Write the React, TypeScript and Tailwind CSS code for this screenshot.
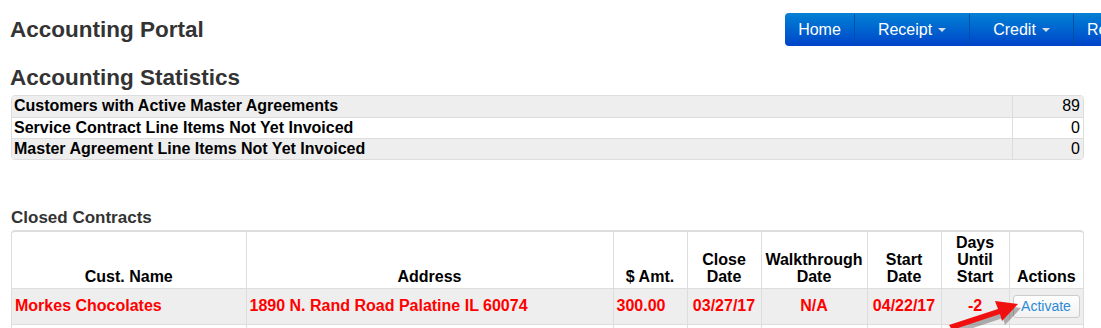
import React from "react";

const stats = [
  { label: "Customers with Active Master Agreements", value: "89", shade: true },
  { label: "Service Contract Line Items Not Yet Invoiced", value: "0", shade: false },
  { label: "Master Agreement Line Items Not Yet Invoiced", value: "0", shade: true },
];

const Caret = () => (
  <span className="ml-[6px] inline-block h-0 w-0 border-x-[4px] border-t-[4px] border-x-transparent border-t-[#d6dde8] align-middle" />
);

const App = () => {
  return (
    <div className="relative h-[328px] w-[1101px] overflow-hidden bg-white font-['Liberation_Sans',Arial,sans-serif] text-black">
      {/* top bar */}
      <div className="flex items-start pt-[13px]">
        <h1 className="mt-[4px] w-[785px] shrink-0 pl-[10px] text-[22.5px] font-bold leading-[26px] text-[#333]">
          Accounting Portal
        </h1>
        <nav className="flex h-[33px] shrink-0 rounded-l-[4px] bg-gradient-to-b from-[#0a80d4] to-[#0043c9] pt-[1px] text-[16px] text-white">
          <a className="flex w-[69px] items-center justify-center">Home</a>
          <a className="flex w-[115px] items-center justify-center border-l border-[#0050a8]">
            Receipt
            <Caret />
          </a>
          <a className="flex w-[104px] items-center justify-center border-l border-[#0050a8]">
            Credit
            <Caret />
          </a>
          <a className="flex w-[100px] items-center border-l border-[#0050a8] pl-[13px]">Reports</a>
        </nav>
      </div>

      <div className="w-[1084px] pl-[11px]">
        <h2 className="mt-[19px] -ml-[1px] text-[22.5px] font-bold leading-[26px] text-[#333]">
          Accounting Statistics
        </h2>

        <div className="mt-[4px] overflow-hidden rounded-[4px] border border-[#ddd]">
          <table className="w-full border-collapse text-[16px]">
            <tbody>
              {stats.map((s, i) => (
                <tr
                  key={s.label}
                  className={`${s.shade ? "bg-[#eee]" : "bg-white"} ${i > 0 ? "border-t border-[#ddd]" : ""}`}
                >
                  <td className="h-[21px] px-[2px] py-0 font-bold leading-[18px]">{s.label}</td>
                  <td className="w-[71px] border-l border-[#ddd] px-[3px] py-0 text-right leading-[18px]">
                    {s.value}
                  </td>
                </tr>
              ))}
            </tbody>
          </table>
        </div>

        <h3 className="mt-[48px] text-[17px] font-bold leading-[20px] text-[#333]">Closed Contracts</h3>

        <div className="mt-[2px] overflow-hidden rounded-t-[4px] border-x border-t-2 border-[#ddd]">
          <table className="w-full table-fixed border-collapse text-[16px]">
            <colgroup>
              <col className="w-[234px]" />
              <col className="w-[367px]" />
              <col className="w-[74px]" />
              <col className="w-[74px]" />
              <col className="w-[106px]" />
              <col className="w-[74px]" />
              <col className="w-[68px]" />
              <col />
            </colgroup>
            <thead>
              <tr className="h-[56px] font-bold leading-[17px]">
                <th className="border-r border-[#ddd] px-[3px] pb-[3px] align-bottom">Cust. Name</th>
                <th className="border-r border-[#ddd] px-[3px] pb-[3px] align-bottom">Address</th>
                <th className="border-r border-[#ddd] px-[3px] pb-[3px] align-bottom">$ Amt.</th>
                <th className="border-r border-[#ddd] px-[3px] pb-[3px] align-bottom">
                  Close
                  <br />
                  Date
                </th>
                <th className="border-r border-[#ddd] px-0 pb-[3px] align-bottom">
                  Walkthrough
                  <br />
                  Date
                </th>
                <th className="border-r border-[#ddd] px-[3px] pb-[3px] align-bottom">
                  Start
                  <br />
                  Date
                </th>
                <th className="border-r border-[#ddd] px-[3px] pb-[3px] align-bottom">
                  Days
                  <br />
                  Until
                  <br />
                  Start
                </th>
                <th className="px-[3px] pb-[3px] align-bottom">Actions</th>
              </tr>
            </thead>
            <tbody>
              <tr className="h-[36px] border-y border-[#ddd] bg-[#eee] font-bold text-[#ff0000]">
                <td className="border-r border-[#ddd] px-[3px]">Morkes Chocolates</td>
                <td className="border-r border-[#ddd] px-[3px]">1890 N. Rand Road Palatine IL 60074</td>
                <td className="border-r border-[#ddd] px-[3px]">300.00</td>
                <td className="border-r border-[#ddd] px-[3px] text-center">03/27/17</td>
                <td className="border-r border-[#ddd] px-[3px] text-center">N/A</td>
                <td className="border-r border-[#ddd] px-[3px] text-center">04/22/17</td>
                <td className="border-r border-[#ddd] px-[3px] text-center">-2</td>
                <td className="px-[3px]">
                  <button className="h-[23px] w-[67px] rounded-[3px] border border-[#ccc] bg-gradient-to-b from-white to-[#f2f2f2] text-[14px] font-normal leading-[20px] text-[#2a8ad6]">
                    Activate
                  </button>
                </td>
              </tr>
              <tr className="h-[20px] bg-white">
                <td className="border-r border-[#ddd]" />
                <td className="border-r border-[#ddd]" />
                <td className="border-r border-[#ddd]" />
                <td className="border-r border-[#ddd]" />
                <td className="border-r border-[#ddd]" />
                <td className="border-r border-[#ddd]" />
                <td className="border-r border-[#ddd]" />
                <td />
              </tr>
            </tbody>
          </table>
        </div>
      </div>

      {/* red annotation arrow */}
      <svg
        className="pointer-events-none absolute left-[944px] top-[292px]"
        width="84"
        height="40"
        viewBox="0 0 84 40"
      >
        <g transform="translate(3,4)" fill="#444" opacity="0.4">
          <path d="M5 33 L54 17 L51 9 L74 12 L58 29 L56 22 L8 38 Z" />
        </g>
        <path d="M5 33 L54 17 L51 9 L74 12 L58 29 L56 22 L8 38 Z" fill="#f01010" />
      </svg>
    </div>
  );
};

export default App;
